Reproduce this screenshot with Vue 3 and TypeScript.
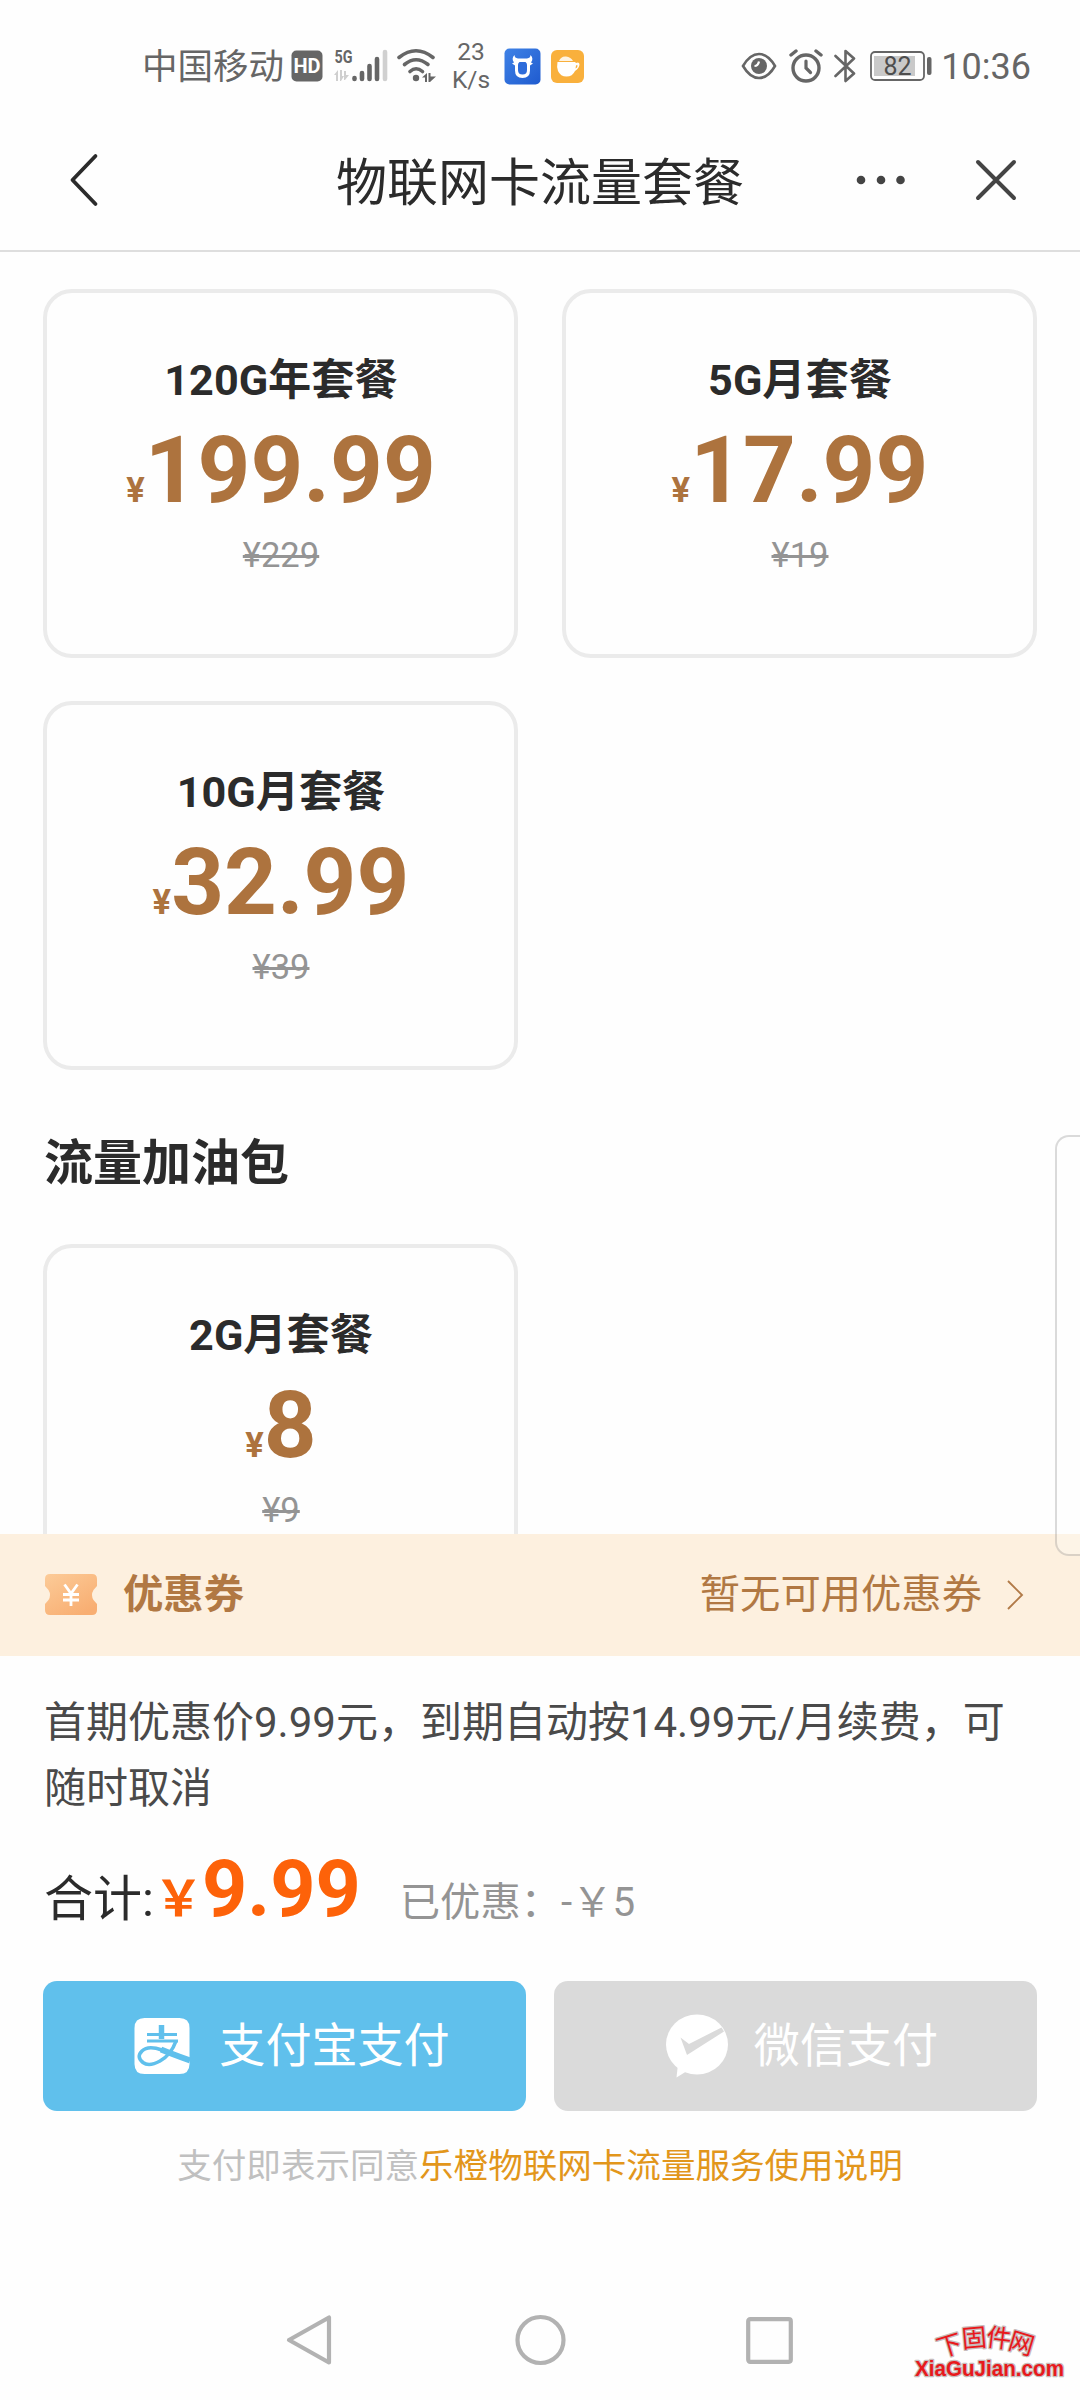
<script setup lang="ts">
interface Plan {
  name: string
  price: string
  original: string
}

const plans: Plan[] = [
  { name: '120G年套餐', price: '199.99', original: '229' },
  { name: '5G月套餐', price: '17.99', original: '19' },
  { name: '10G月套餐', price: '32.99', original: '39' },
]

const boosters: Plan[] = [{ name: '2G月套餐', price: '8', original: '9' }]
</script>

<template>
  <div class="page">
    <div class="status">
      <div class="status-left">
        <span class="carrier">中国移动</span>
        <svg class="hd" width="32" height="32" viewBox="0 0 32 32">
          <rect x="0.5" y="0.5" width="31" height="31" rx="5" fill="#666" />
          <text x="16" y="23" text-anchor="middle" font-family="Roboto, sans-serif" font-weight="700" font-size="20" fill="#fff">HD</text>
        </svg>
        <svg class="signal" width="56" height="52" viewBox="0 -8 56 52">
          <text x="0.5" y="14.5" font-family="Roboto, sans-serif" font-weight="700" font-size="19" textLength="18" lengthAdjust="spacingAndGlyphs" fill="#666">5G</text>
          <path d="M0 27l4-5v11h-2v-6zM6 22h2v6h2l-3 5h-1zM10 23h2v4h3l-4 5h-1z" fill="#cfcfcf" />
          <g stroke-linecap="round" stroke-width="4.6">
            <path d="M20.500 30v1M28 25v6M35.500 18v13M43 11v20" stroke="#666" />
            <path d="M51 4v27" stroke="#d0d0d0" />
          </g>
        </svg>
        <svg class="wifi" width="40" height="36" viewBox="0 0 40 36">
          <g fill="none" stroke="#666" stroke-width="3.600" stroke-linecap="round">
            <path d="M2 9.500Q19 -4 36 9.500" />
            <path d="M7.500 16.500Q19 7 31 16.500" />
            <path d="M13 23.500Q19 18 25.500 23.500" />
          </g>
          <circle cx="19" cy="30" r="3.200" fill="#666" />
          <path d="M25 29.500l5-4.500v9h-2v-4.500zM31.500 25h2v3.500h5.500l-6 5.500h-1.500z" fill="#666" />
        </svg>
        <div class="speed"><span>23</span><span>K/s</span></div>
        <svg class="app-blue" width="37" height="37" viewBox="0 0 37 37">
          <defs>
            <linearGradient id="blue" x1="0" y1="0" x2="1" y2="1">
              <stop offset="0" stop-color="#3f82e6" />
              <stop offset="1" stop-color="#1f5bcf" />
            </linearGradient>
          </defs>
          <rect x="0.500" y="0.500" width="36" height="36" rx="5" fill="url(#blue)" />
          <path d="M10.500 7q0 3 3.500 3.500h9q3.500-.5 3.500-3.500 3.500 3.500.5 7.500l2 1-3 2v5q0 7.500-7.500 7.500T11 22.500v-5l-3-2 2-1q-3-4 .5-7.500z" fill="#fff" />
          <path d="M15.500 14h6q1.500 1 1.500 3v5q0 4.500-4.500 4.500T14 22v-5q0-2 1.500-3z" fill="#2e6cda" />
        </svg>
        <svg class="app-orange" width="33" height="33" viewBox="0 0 33 33">
          <rect width="33" height="33" rx="6" fill="#f9b03c" />
          <path d="M8 11q2-5 7-4.500T22 11z" fill="#fff" opacity="0.850" />
          <path d="M6.500 12H24l1 1q3-1.500 3.500 1 0 4-4.500 7-2.500 5.500-8.500 5.500T7 21q-1.500-4-.5-9z" fill="#fff" />
          <path d="M25 15.500q1.500-1 1.500.5t-2 2.500z" fill="#f9b03c" />
        </svg>
      </div>
      <div class="status-right">
        <svg width="36" height="28" viewBox="0 0 36 28">
          <path d="M2 14Q9 2 18 2t16 12Q27 26 18 26T2 14z" fill="none" stroke="#666" stroke-width="2.600" />
          <circle cx="18" cy="14" r="8" fill="#666" />
          <path d="M18 9.500q-1 4.500-4.500 4.500" fill="none" stroke="#fff" stroke-width="2.200" />
        </svg>
        <svg class="alarm" width="34" height="34" viewBox="0 0 34 34">
          <g fill="none" stroke="#666" stroke-linecap="round">
            <circle cx="17" cy="19" r="13" stroke-width="3.400" />
            <path d="M17 12v7l4.500 4.500" stroke-width="3.200" />
            <path d="M2 6l5-4M27 2l5 4" stroke-width="3.400" />
          </g>
        </svg>
        <svg class="bluetooth" width="22" height="36" viewBox="0 0 22 36">
          <path d="M1.500 8L20 25.500l-8.500 7.500V3L20 10.500 1.500 28" fill="none" stroke="#666" stroke-width="2.600" stroke-linejoin="round" stroke-linecap="round" />
        </svg>
        <svg class="battery" width="62" height="30" viewBox="0 0 62 30">
          <rect x="1" y="1" width="53" height="28" rx="4" fill="none" stroke="#666" stroke-width="1.800" />
          <rect x="4" y="5" width="41" height="20" fill="#c9c9c9" />
          <text x="27.500" y="23.500" text-anchor="middle" font-family="Roboto, sans-serif" font-size="25" fill="#4e4e4e">82</text>
          <rect x="57" y="6" width="4.500" height="18" rx="2" fill="#666" />
        </svg>
        <span class="clock">10:36</span>
      </div>
    </div>

    <header class="header">
      <svg class="back" width="30" height="54" viewBox="0 0 30 54">
        <path d="M26.500 3L3.500 27l23 24" fill="none" stroke="#2b2b2b" stroke-width="3.800" stroke-linecap="round" stroke-linejoin="round" />
      </svg>
      <h1>物联网卡流量套餐</h1>
      <div class="actions">
        <svg width="50" height="10" viewBox="0 0 50 10" fill="#444">
          <circle cx="5" cy="5" r="4.300" /><circle cx="25" cy="5" r="4.300" /><circle cx="44.500" cy="5" r="4.300" />
        </svg>
        <svg width="42" height="42" viewBox="0 0 42 42">
          <path d="M3 3l36 36M39 3L3 39" fill="none" stroke="#444" stroke-width="4" stroke-linecap="round" />
        </svg>
      </div>
    </header>

    <main class="content">
      <section class="grid">
        <article v-for="p in plans" :key="p.name" class="card">
          <h2>{{ p.name }}</h2>
          <p class="price"><small>¥</small>{{ p.price }}</p>
          <p class="original">¥{{ p.original }}</p>
        </article>
      </section>
      <h3>流量加油包</h3>
      <section class="grid">
        <article v-for="p in boosters" :key="p.name" class="card">
          <h2>{{ p.name }}</h2>
          <p class="price"><small>¥</small>{{ p.price }}</p>
          <p class="original">¥{{ p.original }}</p>
        </article>
      </section>
    </main>

    <div class="coupon">
      <svg width="54" height="42" viewBox="0 0 54 42">
        <defs>
          <linearGradient id="ticket" x1="0" y1="0" x2="0.700" y2="1">
            <stop offset="0" stop-color="#fccb98" />
            <stop offset="1" stop-color="#f8ae72" />
          </linearGradient>
        </defs>
        <path d="M6 0h42q5 0 5 5v7l-3.500 4q-3 5 0 10l3.500 4v6q0 5-5 5H6q-5 0-5-5v-6l3.500-4q3-5 0-10L1 12V5q0-5 5-5z" fill="url(#ticket)" />
        <path d="M20.500 10.500l6.500 9 6.500-9M27 19.500V32M19 20.500h16M19 26h16" fill="none" stroke="#fff" stroke-width="2.800" />
      </svg>
      <strong>优惠券</strong>
      <span class="none">暂无可用优惠券</span>
      <svg width="18" height="32" viewBox="0 0 18 32">
        <path d="M2 2l14 14L2 30" fill="none" stroke="#b17a48" stroke-width="1.900" />
      </svg>
    </div>

    <footer class="sheet">
      <p class="notice">首期优惠价9.99元，到期自动按14.99元/月续费，可随时取消</p>
      <div class="total">
        <span>合计:</span><b class="yen">￥</b><b class="amount">9.99</b><span class="saved">已优惠：-￥5</span>
      </div>
      <div class="buttons">
        <button class="alipay">
          <svg width="56" height="58" viewBox="0 0 56 58">
            <path d="M10.500 1h35q10 0 10 10v36q0 10-10 10h-35q-10 0-10-10V11q0-10 10-10z" fill="#fff" />
            <g fill="none" stroke="#60c0ec">
              <path d="M27.500 8v14" stroke-width="5.500" />
              <path d="M13 17.500h30M13 24h31" stroke-width="2.800" />
              <path d="M42 24Q37 38 26 44T9 45.500Q2 40 8 34T28 33" stroke-width="3.600" />
              <path d="M27 32.500Q38 37 56 43.500" stroke-width="6" />
            </g>
          </svg>
          支付宝支付
        </button>
        <button class="wechat">
          <svg width="64" height="64" viewBox="0 0 64 64">
            <ellipse cx="32" cy="30.500" rx="31" ry="30" fill="#fff" />
            <path d="M13 50l-1.500 13.500L22 57z" fill="#fff" />
            <path d="M15.500 23.500l8.500 6.500L56.500 13.500l2.500 4L22 41z" fill="#dadada" />
          </svg>
          微信支付
        </button>
      </div>
      <p class="agreement">支付即表示同意<a>乐橙物联网卡流量服务使用说明</a></p>
    </footer>

    <nav class="nav">
      <svg width="47" height="52" viewBox="0 0 47 52">
        <path d="M43 3.500v45L3 26z" fill="none" stroke="#b2b2b2" stroke-width="4.200" stroke-linejoin="round" />
      </svg>
      <svg width="51" height="52" viewBox="0 0 51 52">
        <circle cx="25.500" cy="26" r="23" fill="none" stroke="#b2b2b2" stroke-width="4.200" />
      </svg>
      <svg class="recent" width="47" height="47" viewBox="0 0 47 47">
        <rect x="2.200" y="2.200" width="42.600" height="42.600" rx="2" fill="none" stroke="#b2b2b2" stroke-width="4.200" />
      </svg>
    </nav>

    <div class="edge-panel"></div>

    <svg class="watermark" width="160" height="64" viewBox="0 0 160 64">
      <g fill="#e8191c" stroke="#c8bcbc" stroke-width="2.500" paint-order="stroke" stroke-linejoin="round">
        <g font-family="'Noto Sans CJK SC', sans-serif" font-size="25" font-weight="400" text-anchor="middle">
          <text transform="translate(42 38) rotate(-17)">下</text>
          <text transform="translate(65 31) rotate(-5)">固</text>
          <text transform="translate(88 31) rotate(7)">件</text>
          <text transform="translate(109 36) rotate(17)">网</text>
        </g>
        <text x="5" y="60" font-family="'Liberation Sans', sans-serif" font-size="21.500" font-weight="700" textLength="149" lengthAdjust="spacingAndGlyphs">XiaGuJian.com</text>
      </g>
    </svg>
  </div>
</template>

<style>
body {
  margin: 0;
  background: #fefefe;
}
</style>

<style scoped>
.page {
  position: relative;
  display: flex;
  flex-direction: column;
  width: 1080px;
  height: 2400px;
  overflow: hidden;
  background: #fefefe;
  color: #2b2b2b;
  font-family: Roboto, 'Noto Sans CJK SC', sans-serif;
}
svg {
  display: block;
  flex: none;
}
h1, h2, h3, p {
  margin: 0;
}
.status {
  display: flex;
  justify-content: space-between;
  height: 118px;
  padding: 14px 49px 0 142px;
  box-sizing: border-box;
  color: #666;
}
.status-left, .status-right {
  display: flex;
  align-items: center;
  height: 104px;
}
.carrier {
  font-size: 35.500px;
  line-height: 40px;
  padding-top: 2px;
}
.hd { margin-left: 7px; }
.signal { margin-left: 11px; }
.wifi { margin-left: 7px; }
.speed {
  display: flex;
  flex-direction: column;
  align-items: center;
  width: 44px;
  margin-left: 12px;
  font-size: 24.500px;
  line-height: 28px;
}
.app-blue { margin-left: 11px; }
.app-orange { margin-left: 10px; }
.alarm { margin-left: 12px; }
.bluetooth { margin-left: 11px; }
.battery { margin-left: 14px; }
.clock {
  margin-left: 9px;
  padding-top: 2px;
  font-size: 36px;
  line-height: 40px;
}
.header {
  display: grid;
  grid-template-columns: 1fr auto 1fr;
  align-items: center;
  height: 134px;
  padding: 0 63px 0 69px;
  box-sizing: border-box;
  border-bottom: 2px solid #dedede;
}
h1 {
  margin: 0 6px 0 0;
  font-size: 51px;
  font-weight: 400;
  line-height: 60px;
}
.back {
  margin-bottom: 8px;
}
.actions {
  display: flex;
  align-items: center;
  justify-content: flex-end;
  gap: 69px;
  margin-bottom: 8px;
}
.content {
  height: 1282px;
  padding: 37px 43px 0;
  box-sizing: border-box;
  overflow: hidden;
}
.grid {
  display: grid;
  grid-template-columns: 475px 475px;
  justify-content: space-between;
  row-gap: 43px;
}
.card {
  height: 369px;
  padding: 58px 0 0 1px;
  box-sizing: border-box;
  border: 4px solid #ebebeb;
  border-radius: 29px;
  text-align: center;
}
h2 {
  font-size: 43.200px;
  font-weight: 700;
  line-height: 60px;
}
.price {
  margin-top: 6px;
  color: #ad733e;
  font-size: 92.160px;
  font-weight: 700;
  line-height: 108px;
}
.price small {
  font-size: 34.560px;
  line-height: 1;
}
.original {
  margin-top: 10px;
  color: #949494;
  font-size: 34.560px;
  line-height: 40px;
  text-decoration: line-through;
}
h3 {
  margin: 59px 0 45px 1px;
  font-size: 49px;
  font-weight: 700;
  line-height: 70px;
}
.coupon {
  display: flex;
  align-items: center;
  flex: none;
  height: 122px;
  padding: 0 56px 0 44px;
  box-sizing: border-box;
  background: #fdf0df;
  color: #b17843;
  font-size: 40.320px;
  line-height: 50px;
}
.coupon strong {
  margin-left: 25px;
}
.none {
  margin-left: auto;
  margin-right: 24px;
}
.sheet {
  padding: 34px 43px 0;
}
.notice {
  margin: 0 0 0 1px;
  color: #4a4a4a;
  font-size: 42px;
  line-height: 66px;
}
.total {
  display: flex;
  align-items: baseline;
  height: 90px;
  margin: 22px 0 0 1px;
  font-size: 49px;
  line-height: 60px;
}
.yen {
  color: #fd6209;
  font-size: 49px;
}
.amount {
  margin-left: -1px;
  color: #fd6209;
  font-size: 79px;
  line-height: 90px;
}
.saved {
  margin-left: 39px;
  color: #949494;
  font-size: 40.320px;
}
.buttons {
  display: flex;
  justify-content: space-between;
  margin-top: 47px;
}
button {
  display: flex;
  align-items: center;
  justify-content: center;
  gap: 29px;
  width: 483px;
  height: 130px;
  padding: 0 0 0 15px;
  box-sizing: border-box;
  border: 0;
  border-radius: 14px;
  color: #fff;
  font: 46.080px/60px Roboto, 'Noto Sans CJK SC', sans-serif;
}
.alipay { background: #60c0ec; }
.wechat {
  gap: 25px;
  padding-left: 12px;
  background: #dadada;
}
.agreement {
  margin-top: 31px;
  color: #c0c0c0;
  font-size: 34.560px;
  line-height: 48px;
  text-align: center;
}
.agreement a {
  color: #e2961b;
}
.nav {
  display: flex;
  align-items: center;
  justify-content: center;
  gap: 182px;
  height: 120px;
  margin-top: 90px;
}
.recent {
  margin: 0 1px 0 -2px;
}
.edge-panel {
  position: absolute;
  top: 1135px;
  right: -20px;
  width: 45px;
  height: 421px;
  box-sizing: border-box;
  border: 2px solid rgba(0, 0, 0, 0.14);
  border-radius: 14px;
  background: rgba(255, 255, 255, 0.25);
}
.watermark {
  position: absolute;
  left: 910px;
  top: 2316px;
}
</style>
